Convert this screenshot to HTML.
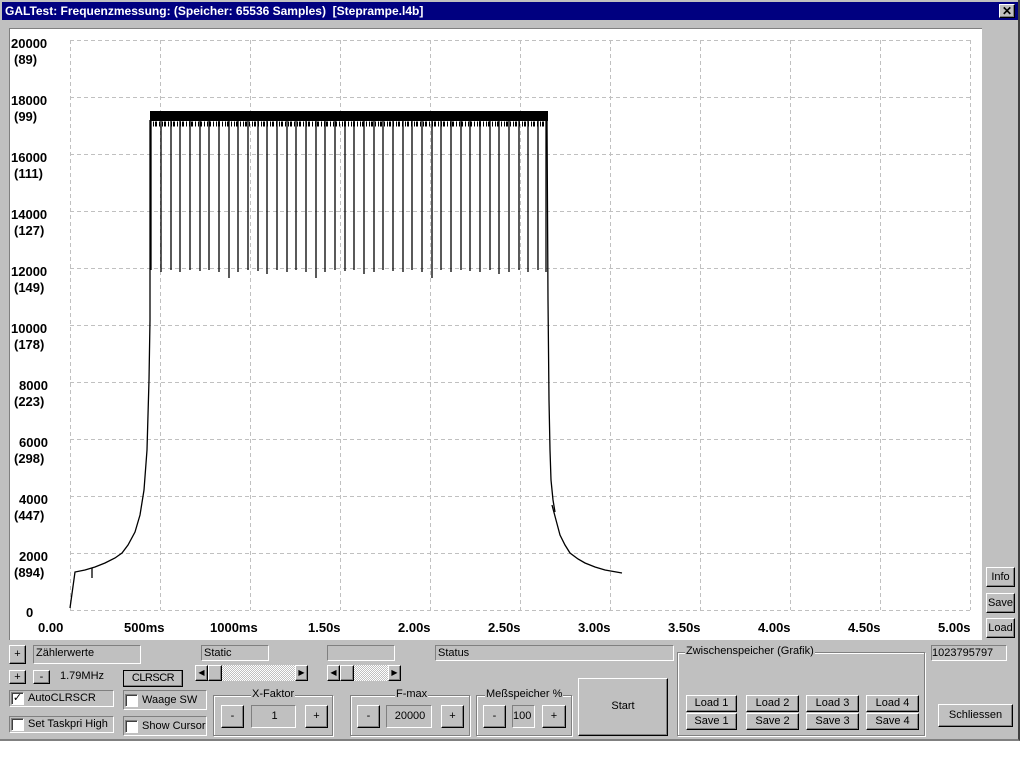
<!DOCTYPE html>
<html><head><meta charset="utf-8"><style>
*{box-sizing:border-box;margin:0;padding:0}
body{width:1022px;height:767px;background:#fff;position:relative;overflow:hidden;font-family:"Liberation Sans",sans-serif;font-size:11px;color:#000}
.a{position:absolute}
.win{left:0;top:0;width:1020px;height:741px;background:#c0c0c0;border-right:2px solid #404040;border-bottom:2px solid #808080}
.title{left:2px;top:2px;width:1016px;height:18px;background:#000080;color:#fff;font-weight:bold;font-size:12px;line-height:18px;padding-left:3px}
.btn{position:absolute;background:#c0c0c0;border:1px solid;border-color:#fff #000 #000 #fff;box-shadow:inset -1px -1px #808080;text-align:center;font-size:11px}
.fld{position:absolute;border:1px solid;border-color:#808080 #fff #fff #808080;font-size:11px;padding-left:2px;line-height:14px}
.grp{position:absolute;border:1px solid #808080;box-shadow:1px 1px #fff, inset 1px 1px #fff}
.grp span{position:absolute;top:-8px;background:#c0c0c0;padding:0 1px;font-size:11px}
.cb{position:absolute;border:1px solid;border-color:#808080 #fff #fff #808080;font-size:11px;line-height:14px}
.box{display:inline-block;width:13px;height:13px;background:#fff;border:1px solid;border-color:#808080 #fff #fff #808080;box-shadow:inset 1px 1px #404040;vertical-align:middle;margin:0 4px 0 1px;font-size:11px;line-height:11px;text-align:center}
.sb{position:absolute;height:16px;background:repeating-conic-gradient(#c0c0c0 0 25%,#fff 0 50%) 0 0/2px 2px}
</style></head><body>
<div class="a win"></div>
<div class="a title">GALTest: Frequenzmessung: (Speicher: 65536 Samples)&nbsp; [Steprampe.l4b]</div>
<div class="btn" style="left:999px;top:4px;width:16px;height:14px;line-height:12px;font-weight:bold;font-size:12px">✕</div>
<svg class="a" style="left:9px;top:28px" width="973" height="612" viewBox="9 28 973 612">
<rect x="9" y="28" width="973" height="612" fill="#fff"/>
<line x1="9" y1="28.5" x2="982" y2="28.5" stroke="#808080"/>
<line x1="9.5" y1="28" x2="9.5" y2="640" stroke="#808080"/>
<g stroke="#c0c0c0" stroke-dasharray="4 3" stroke-width="1">
<path d="M70.5 40V610M160.5 40V610M250.5 40V610M340.5 40V610M430.5 40V610M520.5 40V610M610.5 40V610M700.5 40V610M790.5 40V610M880.5 40V610M970.5 40V610"/>
<path d="M70 40.5H970M70 97.5H970M70 154.5H970M70 211.5H970M70 268.5H970M70 325.5H970M70 382.5H970M70 439.5H970M70 496.5H970M70 553.5H970M70 610.5H970"/>
</g>
<g font-weight="bold" font-size="13" font-family="Liberation Sans,sans-serif">
<text x="11" y="48">20000</text><text x="14" y="64">(89)</text>
<text x="11" y="105">18000</text><text x="14" y="121">(99)</text>
<text x="11" y="162">16000</text><text x="14" y="178">(111)</text>
<text x="11" y="219">14000</text><text x="14" y="235">(127)</text>
<text x="11" y="276">12000</text><text x="14" y="292">(149)</text>
<text x="11" y="333">10000</text><text x="14" y="349">(178)</text>
<text x="19" y="390">8000</text><text x="14" y="406">(223)</text>
<text x="19" y="447">6000</text><text x="14" y="463">(298)</text>
<text x="19" y="504">4000</text><text x="14" y="520">(447)</text>
<text x="19" y="561">2000</text><text x="14" y="577">(894)</text>
<text x="26" y="617">0</text>
<text x="38" y="632">0.00</text><text x="124" y="632">500ms</text><text x="210" y="632">1000ms</text>
<text x="308" y="632">1.50s</text><text x="398" y="632">2.00s</text><text x="488" y="632">2.50s</text>
<text x="578" y="632">3.00s</text><text x="668" y="632">3.50s</text><text x="758" y="632">4.00s</text>
<text x="848" y="632">4.50s</text><text x="938" y="632">5.00s</text>
</g>
<g stroke="#000" fill="none" stroke-width="1.3">
<path d="M70 608L75 572L85 570L95 567L105 563L115 558L122 553L128 545L135 532L140 515L144 490L147 450L149 380L150 320L150 120"/>
<path d="M92 568V578M552 505L556 520L560 535L565 545L570 553L578 559L585 563L595 567L605 570L622 573"/>
<path d="M547 120L548 300L549 400L550 450L551 480L553 500L555 512"/>
<path d="M151 121V270M161 121V272M171 121V270M180 121V272M190 121V270M200 121V271M209 121V270M219 121V272M229 121V278M238 121V272M248 121V270M258 121V271M267 121V274M277 121V270M287 121V272M296 121V270M306 121V272M316 121V278M325 121V272M335 121V270M345 121V271M354 121V270M364 121V274M374 121V272M383 121V270M393 121V271M403 121V272M412 121V270M422 121V272M432 121V278M441 121V270M451 121V272M461 121V270M470 121V271M480 121V272M490 121V270M499 121V274M509 121V272M519 121V270M528 121V272M538 121V270M546 121V272"/>
</g>
<rect x="150" y="111" width="398" height="10" fill="#000"/>
<line x1="150" y1="124" x2="548" y2="124" stroke="#000" stroke-width="5" stroke-dasharray="1 2 1 1 2 2"/>
</svg>
<div class="btn" style="left:986px;top:567px;width:29px;height:20px;line-height:18px">Info</div>
<div class="btn" style="left:986px;top:593px;width:29px;height:20px;line-height:18px">Save</div>
<div class="btn" style="left:986px;top:618px;width:29px;height:20px;line-height:18px">Load</div>

<div class="btn" style="left:9px;top:645px;width:17px;height:19px;line-height:17px">+</div>
<div class="fld" style="left:33px;top:645px;width:108px;height:19px">Zählerwerte</div>
<div class="btn" style="left:9px;top:670px;width:17px;height:14px;line-height:12px">+</div>
<div class="btn" style="left:33px;top:670px;width:17px;height:14px;line-height:12px">-</div>
<div class="a" style="left:60px;top:670px">1.79MHz</div>
<div class="btn" style="left:123px;top:670px;width:60px;height:17px;line-height:14px;border:1px solid #000;letter-spacing:-.5px">CLRSCR</div>
<div class="fld" style="left:201px;top:645px;width:68px;height:16px">Static</div>
<div class="fld" style="left:327px;top:645px;width:68px;height:16px"></div>
<div class="fld" style="left:435px;top:645px;width:239px;height:16px">Status</div>
<div class="sb" style="left:195px;top:665px;width:113px"></div>
<div class="btn" style="left:195px;top:665px;width:13px;height:16px;font-size:8px;line-height:14px">◀</div>
<div class="btn" style="left:208px;top:665px;width:14px;height:16px"></div>
<div class="btn" style="left:295px;top:665px;width:13px;height:16px;font-size:8px;line-height:14px">▶</div>
<div class="sb" style="left:327px;top:665px;width:74px"></div>
<div class="btn" style="left:327px;top:665px;width:13px;height:16px;font-size:8px;line-height:14px">◀</div>
<div class="btn" style="left:340px;top:665px;width:14px;height:16px"></div>
<div class="btn" style="left:388px;top:665px;width:13px;height:16px;font-size:8px;line-height:14px">▶</div>

<div class="cb" style="left:9px;top:690px;width:105px;height:17px"><span class="box">✓</span>AutoCLRSCR</div>
<div class="cb" style="left:9px;top:716px;width:105px;height:17px"><span class="box"></span>Set Taskpri High</div>
<div class="cb" style="left:123px;top:690px;width:84px;height:20px;line-height:18px"><span class="box"></span>Waage SW</div>
<div class="cb" style="left:123px;top:716px;width:84px;height:20px;line-height:18px"><span class="box"></span>Show Cursor</div>

<div class="grp" style="left:213px;top:695px;width:120px;height:41px"><span style="left:37px">X-Faktor</span></div>
<div class="btn" style="left:221px;top:705px;width:23px;height:23px;line-height:21px">-</div>
<div class="fld" style="left:251px;top:705px;width:45px;height:23px;line-height:21px;text-align:center">1</div>
<div class="btn" style="left:305px;top:705px;width:23px;height:23px;line-height:21px">+</div>
<div class="grp" style="left:350px;top:695px;width:120px;height:41px"><span style="left:44px">F-max</span></div>
<div class="btn" style="left:357px;top:705px;width:23px;height:23px;line-height:21px">-</div>
<div class="fld" style="left:386px;top:705px;width:46px;height:23px;line-height:21px;text-align:center">20000</div>
<div class="btn" style="left:441px;top:705px;width:23px;height:23px;line-height:21px">+</div>
<div class="grp" style="left:476px;top:695px;width:96px;height:41px"><span style="left:8px">Meßspeicher %</span></div>
<div class="btn" style="left:483px;top:705px;width:23px;height:23px;line-height:21px">-</div>
<div class="fld" style="left:512px;top:705px;width:23px;height:23px;line-height:21px;padding:0">100</div>
<div class="btn" style="left:542px;top:705px;width:24px;height:23px;line-height:21px">+</div>
<div class="btn" style="left:578px;top:678px;width:90px;height:58px;line-height:54px">Start</div>
<div class="grp" style="left:677px;top:652px;width:248px;height:84px"><span style="left:7px">Zwischenspeicher (Grafik)</span></div>
<div class="btn" style="left:686px;top:695px;width:51px;height:17px;line-height:15px">Load 1</div>
<div class="btn" style="left:746px;top:695px;width:53px;height:17px;line-height:15px">Load 2</div>
<div class="btn" style="left:806px;top:695px;width:53px;height:17px;line-height:15px">Load 3</div>
<div class="btn" style="left:866px;top:695px;width:53px;height:17px;line-height:15px">Load 4</div>
<div class="btn" style="left:686px;top:713px;width:51px;height:17px;line-height:15px">Save 1</div>
<div class="btn" style="left:746px;top:713px;width:53px;height:17px;line-height:15px">Save 2</div>
<div class="btn" style="left:806px;top:713px;width:53px;height:17px;line-height:15px">Save 3</div>
<div class="btn" style="left:866px;top:713px;width:53px;height:17px;line-height:15px">Save 4</div>
<div class="fld" style="left:931px;top:645px;width:76px;height:16px;padding-left:0">1023795797</div>
<div class="btn" style="left:938px;top:704px;width:75px;height:23px;line-height:21px">Schliessen</div>
</body></html>
